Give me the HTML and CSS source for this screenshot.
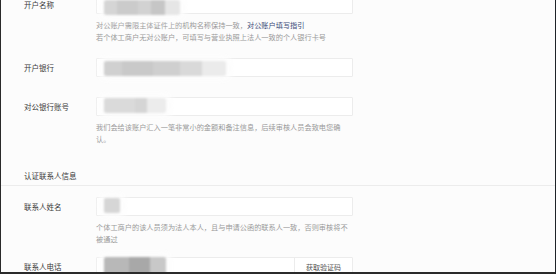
FILE: index.html
```html
<!DOCTYPE html>
<html lang="zh-CN">
<head>
    <meta charset="UTF-8">
    <title>认证信息</title>
    <link rel="stylesheet" href="styles.css">
</head>
<body>
<div class="frame">
    <div class="form">
        <div class="row row-name">
            <div class="label">开户名称</div>
            <div class="field">
                <div class="input"></div>
                <div class="blur blur-name"></div>
                <p class="tip">对公账户需限主体证件上的机构名称保持一致，<a href="#">对公账户填写指引</a><br>若个体工商户无对公账户，可填写与营业执照上法人一致的个人银行卡号</p>
            </div>
        </div>
        <div class="row row-bank">
            <div class="label">开户银行</div>
            <div class="field">
                <div class="input"></div>
                <div class="blur blur-bank"></div>
            </div>
        </div>
        <div class="row row-account">
            <div class="label">对公银行账号</div>
            <div class="field">
                <div class="input"></div>
                <div class="blur blur-account"></div>
                <p class="tip tip-narrow">我们会给该账户汇入一笔非常小的金额和备注信息，后续审核人员会致电您确认。</p>
            </div>
        </div>

        <div class="section">认证联系人信息</div>

        <div class="row row-contact">
            <div class="label">联系人姓名</div>
            <div class="field">
                <div class="input"></div>
                <div class="blur blur-contact"></div>
                <p class="tip">个体工商户的该人员须为法人本人，且与申请公函的联系人一致，否则审核将不被通过</p>
            </div>
        </div>
        <div class="row row-phone">
            <div class="label">联系人电话</div>
            <div class="field">
                <div class="input input-group">
                    <span class="addon">获取验证码</span>
                </div>
                <div class="blur blur-phone"></div>
            </div>
        </div>
    </div>
</div>
</body>
</html>
```

FILE: styles.css
```css
body {
    margin: 0;
    font-family: "Noto Sans CJK SC", "Noto Sans", sans-serif;
    background: #fcfcfc;
}
.frame {
    height: 272px;
    overflow: hidden;
    background: #fcfcfc;
    border-left: 1px solid #2a2a2a;
    border-right: 1px solid #1e2328;
    border-bottom: 2px solid #2b2b2b;
}
.form { margin-top: -5px; }
.row { display: flex; align-items: flex-start; }
.label {
    width: 72px;
    padding-left: 23px;
    font-size: 7.5px;
    line-height: 19px;
    color: #3a3a3a;
}
.field { position: relative; width: 257px; }
.input {
    height: 17px;
    background: #fff;
    border: 1px solid #ececec;
    border-radius: 1px;
}
.input-group { display: flex; justify-content: flex-end; }
.addon {
    width: 57px;
    border-left: 1px solid #ececec;
    font-size: 7px;
    line-height: 19px;
    text-align: center;
    color: #555;
}
.tip {
    margin: 6px 0 0;
    font-size: 7.2px;
    line-height: 11.5px;
    color: #9a9a9a;
}
.tip-narrow { width: 250px; }
.tip a { color: #3b4b78; text-decoration: none; }

.row-bank { margin-top: 15px; }
.row-account { margin-top: 20px; }
.row-contact { margin-top: 11px; }
.row-phone { margin-top: 12px; }

.section {
    margin: 25px 0 0;
    padding: 0 0 4px 23px;
    font-size: 7.5px;
    line-height: 11px;
    color: #3a3a3a;
    border-bottom: 1px solid #ececec;
}

/* mosaic placeholders over the entered values */
.blur {
    position: absolute;
    height: 15px;
    border-radius: 2px;
    filter: blur(1.2px);
    box-shadow: 0 0 7px 5px #fdfdfd;
}
.blur-name {
    left: 8px; top: 5px; width: 76px;
    background: linear-gradient(90deg, #d5d5d5 0 17%, #cbcbcb 17% 45%, #d2d2d2 45% 62%, #c6c6c6 62% 80%, #e6e6e6 80%);
}
.blur-bank {
    left: 8px; top: 3px; width: 122px;
    background: linear-gradient(90deg, #d0d0d0 0 15%, #c9c9c9 15% 40%, #cfcfcf 40% 62%, #d9d9d9 62% 80%, #ebebeb 80%);
}
.blur-account {
    left: 8px; top: 1px; width: 62px;
    background: linear-gradient(90deg, #dadada 0 50%, #d5d5d5 50% 70%, #ececec 70%);
}
.blur-contact {
    left: 8px; top: 1px; width: 16px;
    background: #d6d6d6;
}
.blur-phone {
    left: 8px; top: 0; width: 62px; height: 19px;
    background: linear-gradient(90deg, #b8b8b8 0 40%, #a8a8a8 40% 75%, #c8c8c8 75%);
}
```
